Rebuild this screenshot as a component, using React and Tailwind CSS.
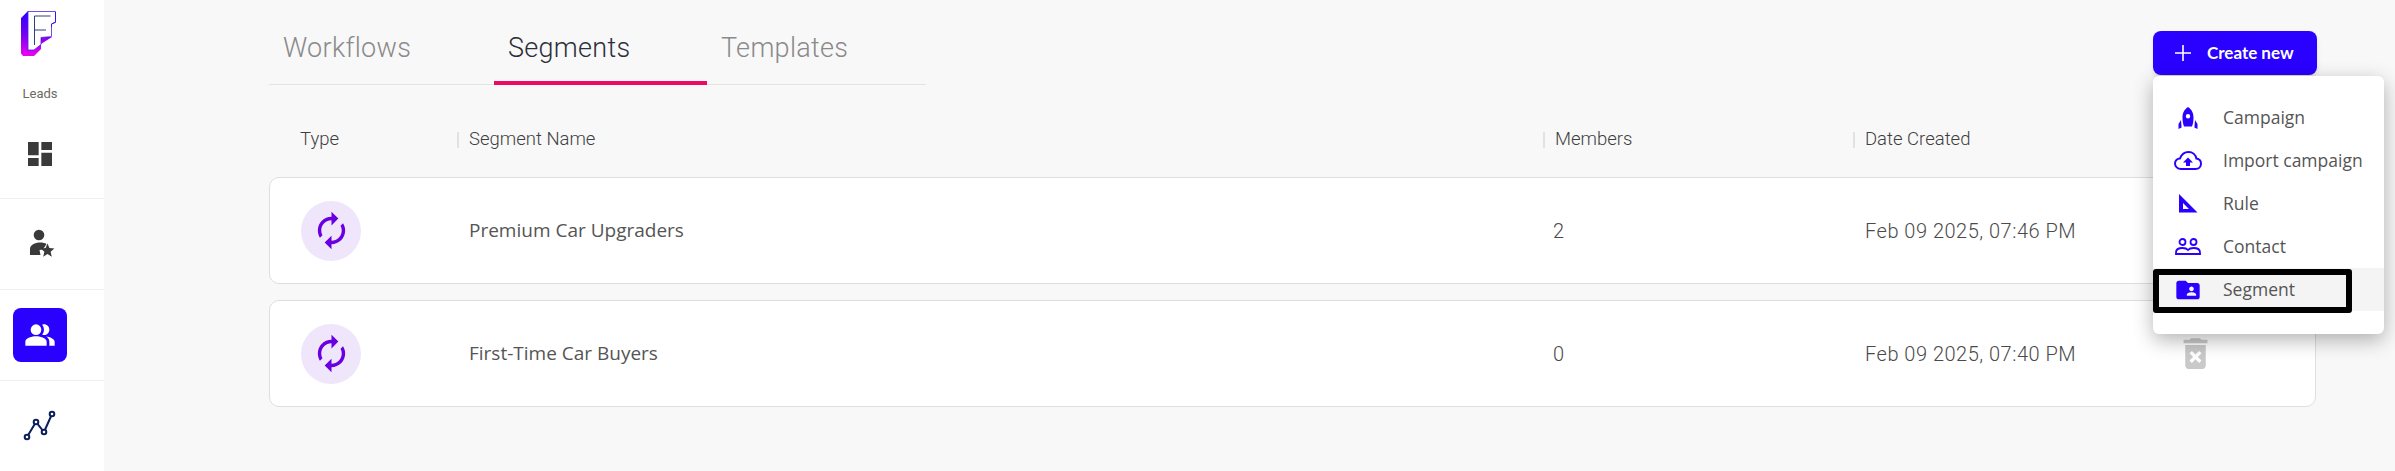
import React from "react";
import { MdDashboard, MdPeopleAlt, MdFolderShared, MdDeleteForever, MdAutorenew } from "react-icons/md";

function Logo() {
  return (
    <svg width="36" height="46" viewBox="21 11 36 46" className="block">
      <defs>
        <linearGradient id="lg" x1="0" y1="0" x2="0" y2="1">
          <stop offset="0" stopColor="#2a00ff" />
          <stop offset="0.55" stopColor="#7a00f0" />
          <stop offset="1" stopColor="#f000f0" />
        </linearGradient>
      </defs>
      <path d="M28 11L21 18V53.5L23 56H34L41 49V44L52 37H41V35L28 40Z" fill="url(#lg)" />
      <path d="M28 11.5H55.5V22.5L51.5 24V36.5L41 37.5V44.5L34 50H28Z" fill="#fff" stroke="#4a22e8" strokeWidth="0.8" />
      <path d="M34.5 45V16H50.5M34.5 30H46" fill="none" stroke="#1a2a66" strokeWidth="0.9" />
      <path d="M55.5 12V22L51.5 24V27" fill="none" stroke="#3a10f0" strokeWidth="1" />
    </svg>
  );
}

function PersonStar() {
  return (
    <svg width="40" height="40" viewBox="0 4 40 40" fill="#3a3a3a">
      <circle cx="19" cy="15" r="5.3" />
      <path d="M10 35V29C10 25 15 22.5 20 22.5C23 22.5 25 23 26.5 24L23 29.5L19.5 30L20.5 35Z" />
      <path d="M27.5 23.5L29.4 28.1L34.4 28.5L30.6 31.8L31.8 36.7L27.5 34L23.2 36.7L24.4 31.8L20.6 28.5L25.6 28.1Z" />
    </svg>
  );
}

function Chart() {
  return (
    <svg width="40" height="40" viewBox="0 5 40 40" fill="none" stroke="#0b1f5c">
      <path d="M7 36L16 21L24 31L32 13" strokeWidth="2" />
      <g fill="#fff" strokeWidth="2">
        <circle cx="7" cy="36" r="2.3" />
        <circle cx="16" cy="21" r="2.3" />
        <circle cx="24" cy="31" r="2.3" />
        <circle cx="32" cy="13" r="2.3" />
      </g>
    </svg>
  );
}

function Rocket() {
  return (
    <svg width="20" height="22" viewBox="0 0 20 22" fill="#2a00ff">
      <path fillRule="evenodd" d="M10 0C14 2.5 15.5 6.5 15.5 10.5C15.5 14 15 17 14 19.5H6C5 17 4.5 14 4.5 10.5C4.5 6.5 6 2.5 10 0ZM10 7A2.2 2.2 0 1 0 10 11.4A2.2 2.2 0 1 0 10 7Z" />
      <path d="M3 13L3.6 20.5L0.5 22L0.5 17ZM17 13L16.4 20.5L19.5 22L19.5 17Z" />
    </svg>
  );
}

function CloudUp() {
  return (
    <svg width="28" height="19" viewBox="0 0 28 19" fill="none" stroke="#2a00ff" strokeWidth="2">
      <path d="M7 18C3.5 18 1 15.5 1 12.5C1 9.8 3.2 7.6 6 7.4C7.5 3.5 10.5 1 14.5 1C18.8 1 21.8 4 22.4 7.6C25 8 27 10 27 12.8C27 15.8 24.8 18 21.5 18Z" />
      <path d="M14 6.5L19 11.5H16V15H12V11.5H9Z" fill="#2a00ff" stroke="none" />
    </svg>
  );
}

function SetSquare() {
  return (
    <svg width="19" height="19" viewBox="0 0 19 19" fill="#2a00ff">
      <path fillRule="evenodd" d="M0 0L18.5 18.5H0ZM4 9V15H10Z" />
    </svg>
  );
}

function Contact() {
  return (
    <svg width="26" height="17" viewBox="0 0 26 17" fill="none" stroke="#2a00ff" strokeWidth="1.8">
      <circle cx="7.5" cy="4" r="3" />
      <circle cx="18.5" cy="4" r="3" />
      <path d="M1 16V14.5C1 11.5 4 10 7.5 10C10 10 12 10.8 13 12C14 10.8 16 10 18.5 10C22 10 25 11.5 25 14.5V16Z" />
    </svg>
  );
}

function Plus() {
  return (
    <svg width="16" height="16" viewBox="0 0 16 16" stroke="#fff" strokeWidth="1.6">
      <path d="M8 0V16M0 8H16" />
    </svg>
  );
}

function Side({ children, active }) {
  return (
    <div className="h-[91px] border-b border-[#f0f0f0] flex items-center justify-center pr-6">
      {active ? (
        <div className="w-[54px] h-[54px] rounded-lg bg-[#2a00ff] flex items-center justify-center">{children}</div>
      ) : (
        children
      )}
    </div>
  );
}

const rows = [
  { name: "Premium Car Upgraders", members: "2", date: "Feb 09 2025, 07:46 PM" },
  { name: "First-Time Car Buyers", members: "0", date: "Feb 09 2025, 07:40 PM" },
];

const menu = [
  { label: "Campaign", icon: <Rocket /> },
  { label: "Import campaign", icon: <CloudUp /> },
  { label: "Rule", icon: <SetSquare /> },
  { label: "Contact", icon: <Contact /> },
  { label: "Segment", icon: <MdFolderShared size={28} color="#2a00ff" />, hl: true },
];

function Sep({ children }) {
  return (
    <div className="flex items-center">
      <span className="w-0.5 h-4 bg-[#e2e2e2] mr-[10px]" />
      <span>{children}</span>
    </div>
  );
}

export default function App() {
  return (
    <div className="flex h-[471px] bg-[#f8f8f8] overflow-hidden font-['Roboto',sans-serif]">
      <aside className="w-[104px] shrink-0 bg-white">
        <div className="h-[199px] border-b border-[#f0f0f0] flex flex-col items-center pt-[11px] pr-6">
          <div className="-ml-[3px]"><Logo /></div>
          <div className="mt-[29px] text-[13px] leading-4 text-[#6b6b60]">Leads</div>
          <MdDashboard size={32} color="#3a3a3a" className="mt-[36px]" />
        </div>
        <Side><PersonStar /></Side>
        <Side active><MdPeopleAlt size={32} color="#fff" /></Side>
        <Side><Chart /></Side>
      </aside>

      <main className="flex-1 pl-[165px] pr-[79px]">
        <div className="flex justify-between items-start">
          <div className="flex h-[85px] w-[657px] border-b border-[#e3e3e3] text-[27px] font-light tracking-[0.3px] text-[#8a8a8a]">
            <div className="w-[225px] pl-[14px] pt-[30px] leading-9">Workflows</div>
            <div className="w-[213px] h-[85px] border-b-4 border-[#ee0a63] pl-[14px] pt-[30px] leading-9 text-[#2b2f3a]">Segments</div>
            <div className="w-[219px] pl-[14px] pt-[30px] leading-9">Templates</div>
          </div>
          <div className="relative mt-[31px] -mr-px">
            <button className="flex items-center w-[164px] h-[44px] rounded-lg bg-[#2a00ff] pl-[22px] shadow-md text-white text-[17px] font-bold font-['Lato',sans-serif]">
              <Plus />
              <span className="ml-[16px]">Create new</span>
            </button>
            <div className="absolute left-0 top-[45px] w-[231px] h-[258px] z-10 rounded-md bg-white pt-[20px] shadow-[0_6px_20px_rgba(0,0,0,0.3)]">
              {menu.map((m) => (
                <div key={m.label} className={`relative flex items-center h-[43px] text-[17.5px] text-[#555555] font-['Open_Sans',sans-serif] ${m.hl ? "bg-[#f4f4f4]" : ""}`}>
                  <div className="w-[70px] flex justify-center">{m.icon}</div>
                  <span>{m.label}</span>
                  {m.hl && <div className="absolute left-0 top-[1px] w-[199px] h-[44px] border-[6px] border-black rounded-[3px]" />}
                </div>
              ))}
            </div>
          </div>
        </div>

        <div className="grid grid-cols-[157px_1086px_310px_1fr] h-[92px] pt-[18px] items-center text-[18.5px] font-light text-[#3f3f3f] pl-[31px]">
          <div>Type</div>
          <Sep>Segment Name</Sep>
          <Sep>Members</Sep>
          <Sep>Date Created</Sep>
        </div>

        <div className="flex flex-col gap-4">
          {rows.map((r) => (
            <div key={r.name} className="grid grid-cols-[168px_1084px_312px_1fr] items-center h-[107px] rounded-[10px] border border-[#dedede] bg-white pl-[31px] text-[#4a4a4a]">
              <div className="w-[60px] h-[60px] rounded-full bg-[#f0e6fb] flex items-center justify-center">
                <MdAutorenew size={41} color="#6a00e0" />
              </div>
              <div className="font-['Open_Sans',sans-serif] text-[19px] text-[#555555]">{r.name}</div>
              <div className="font-light text-xl">{r.members}</div>
              <div className="flex items-center justify-between pr-[99px]">
                <span className="font-light text-xl tracking-[0.5px]">{r.date}</span>
                <MdDeleteForever size={41} color="#c9c9c9" />
              </div>
            </div>
          ))}
        </div>
      </main>
    </div>
  );
}
